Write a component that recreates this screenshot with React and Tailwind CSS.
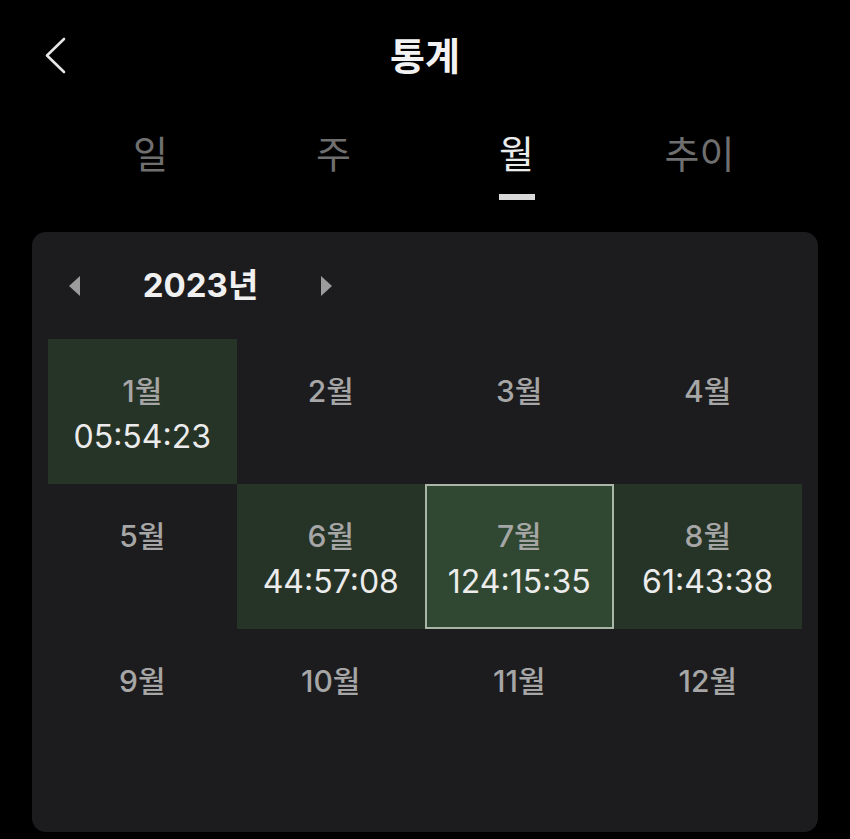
import { useState } from 'react'

const months = [
  { m: '1월', time: '05:54:23', level: 1 },
  { m: '2월' },
  { m: '3월' },
  { m: '4월' },
  { m: '5월' },
  { m: '6월', time: '44:57:08', level: 1 },
  { m: '7월', time: '124:15:35', level: 2 },
  { m: '8월', time: '61:43:38', level: 1 },
  { m: '9월' },
  { m: '10월' },
  { m: '11월' },
  { m: '12월' }
]

const tabs = ['일', '주', '월', '추이']

const MonthCell = ({ m, time, level }) => {
  const tone =
    level === 2
      ? 'bg-[#304831] border-2 border-[#a8b5a7] pt-[33px]'
      : level === 1
        ? 'bg-[#263327] pt-[35px]'
        : 'pt-[35px]'
  return (
    <div className={`h-[145px] flex flex-col items-center gap-[12px] ${tone}`}>
      <span className="text-[30px] leading-[34px] font-medium text-[#a6a6a6]">{m}</span>
      {time && <span className="text-[32px] leading-[34px] text-[#ececec]">{time}</span>}
    </div>
  )
}

const App = () => {
  const [activeTab, setActiveTab] = useState(2)

  return (
    <div
      className="w-[850px] h-[839px] bg-black overflow-hidden"
      style={{ fontFamily: 'Inter, "Noto Sans CJK KR", sans-serif' }}
    >
      {/* header */}
      <header className="grid grid-cols-[1fr_auto_1fr] items-center h-[112px]">
        <div className="pl-[44px] flex items-center">
          <svg width="24" height="38" viewBox="0 0 24 38" fill="none" stroke="#e6e6e6" strokeWidth="2.6" strokeLinecap="round" strokeLinejoin="round">
            <path d="M20 2 L3 18.5 L20 35" />
          </svg>
        </div>
        <h1 className="text-[38px] leading-none font-semibold text-[#f2f2f2]">통계</h1>
        <div />
      </header>

      {/* tabs */}
      <nav className="grid grid-cols-4 px-[59px] pt-[22px]">
        {tabs.map((tab, idx) => (
          <button
            key={tab}
            onClick={() => setActiveTab(idx)}
            className="flex flex-col items-center"
          >
            <span className={`text-[38px] leading-[40px] ${activeTab === idx ? 'text-[#ebebeb]' : 'text-[#6f6f6f]'}`}>{tab}</span>
            <span className={`mt-[20px] w-[36px] h-[6px] ${activeTab === idx ? 'bg-[#d9d9d9]' : 'bg-transparent'}`} />
          </button>
        ))}
      </nav>

      {/* card */}
      <section className="mx-[32px] mt-[32px] rounded-[14px] bg-[#1c1c1e] px-[16px] pb-[58px]">
        <div className="h-[107px] flex items-center pl-[21px]">
          <div className="w-[263px] flex items-center justify-between">
            <svg width="11" height="20" viewBox="0 0 11 20" fill="#9c9c9c">
              <path d="M11 0 L0 10 L11 20 Z" />
            </svg>
            <span className="text-[33px] leading-none font-bold text-[#f0f0f0]">2023년</span>
            <svg width="11" height="20" viewBox="0 0 11 20" fill="#9c9c9c">
              <path d="M0 0 L11 10 L0 20 Z" />
            </svg>
          </div>
        </div>

        <div className="grid grid-cols-4">
          {months.map((item) => (
            <MonthCell key={item.m} {...item} />
          ))}
        </div>
      </section>
    </div>
  )
}

export default App
